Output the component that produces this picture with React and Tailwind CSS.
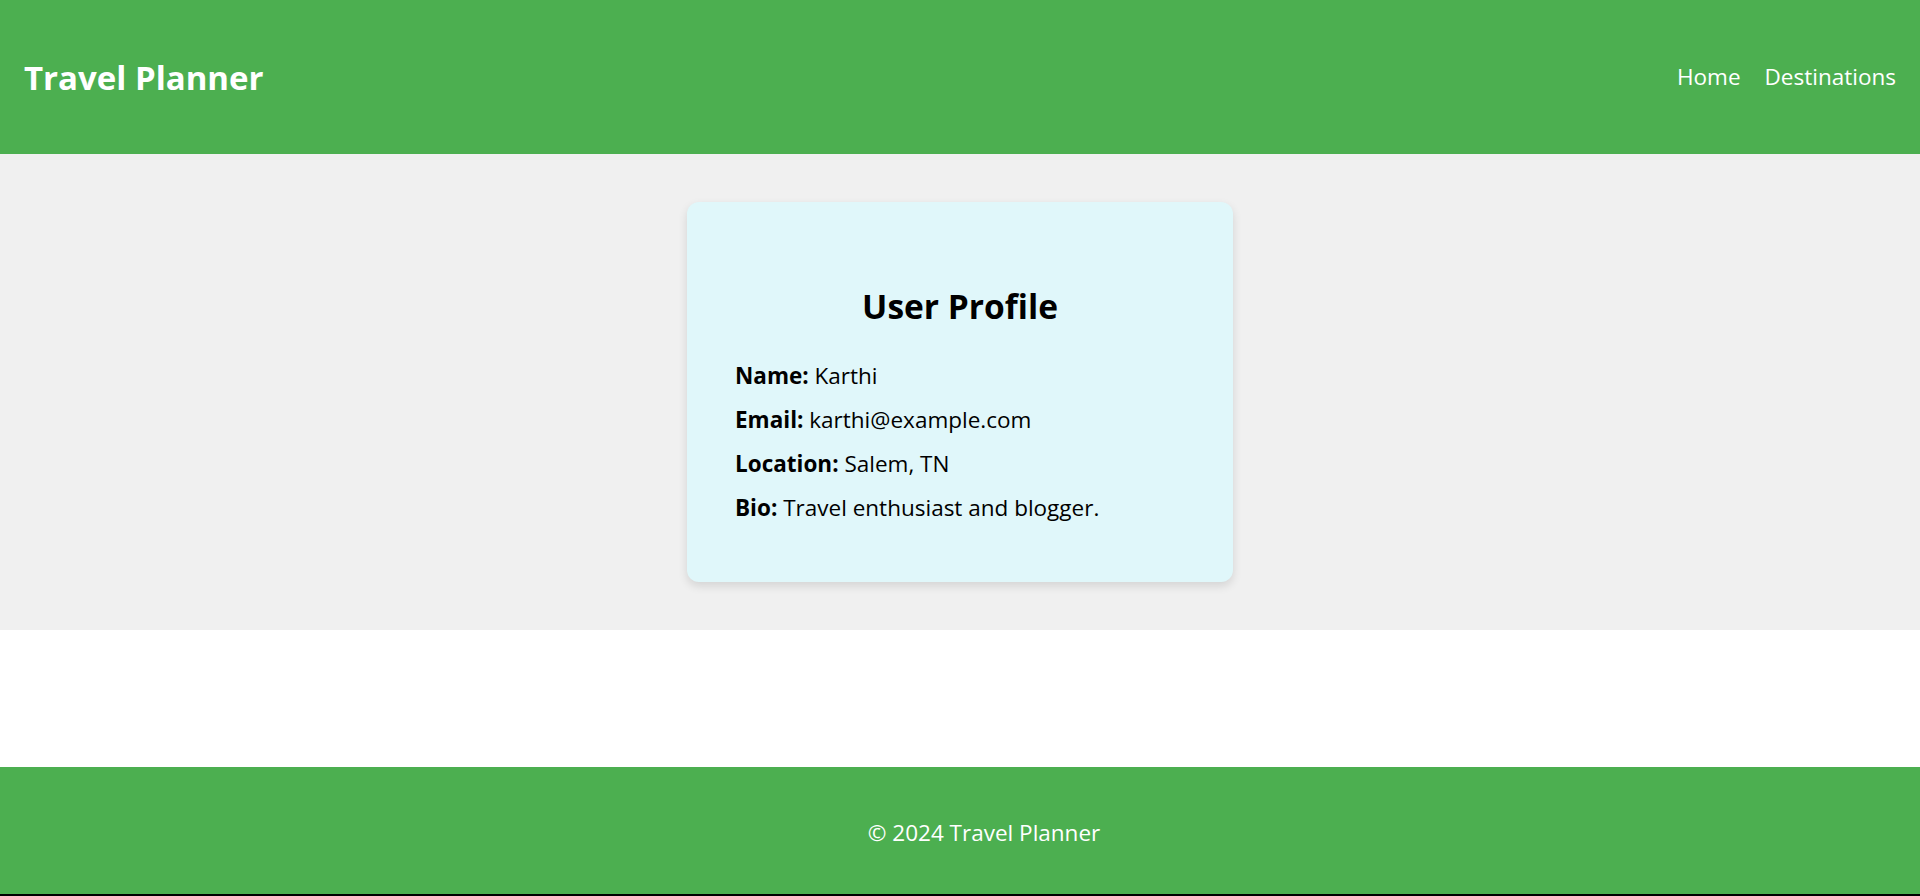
export default function App() {
  const font = { fontFamily: '"Open Sans", "Noto Sans", sans-serif' };
  return (
    <div className="min-h-screen flex flex-col bg-white" style={font}>
      <header className="h-[154px] bg-[#4caf50] flex items-center justify-between pl-[24px] pr-[24px] text-white">
        <h1 className="text-[33px] font-bold leading-none">Travel Planner</h1>
        <nav className="flex gap-[24px] text-[22.5px] leading-none">
          <a>Home</a>
          <a>Destinations</a>
        </nav>
      </header>
      <main className="bg-[#f0f0f0] py-[48px] flex justify-center">
        <div className="w-[546px] h-[380px] bg-[#e0f7fa] rounded-[12px] shadow-[0_4px_10px_rgba(0,0,0,0.12)] pt-[82px] pl-[48px] pr-[48px] text-black">
          <h2 className="text-[33.5px] font-bold leading-[44px] text-center">User Profile</h2>
          <div className="mt-[26px] text-[22.5px] leading-[44px]">
            <p><strong>Name:</strong> Karthi</p>
            <p><strong>Email:</strong> karthi@example.com</p>
            <p><strong>Location:</strong> Salem, TN</p>
            <p><strong>Bio:</strong> Travel enthusiast and blogger.</p>
          </div>
        </div>
      </main>
      <div className="flex-1" />
      <footer className="h-[127px] bg-[#4caf50] flex items-center justify-center text-white text-[22.5px] pt-[4px] pl-[48px]">
        © 2024 Travel Planner
      </footer>
      <div className="h-[2px] bg-black" />
    </div>
  );
}
